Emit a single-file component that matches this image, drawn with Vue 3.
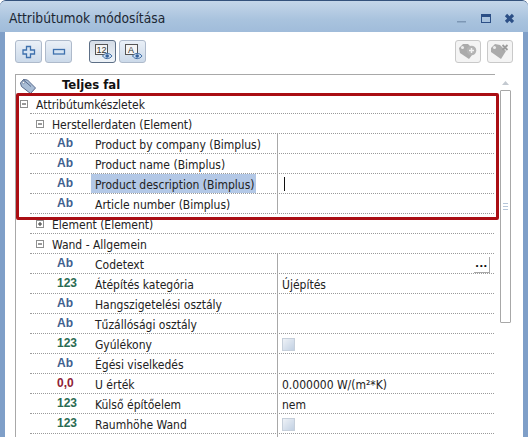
<script setup>
const rows = [
  { type: 'group', level: 0, open: true, label: 'Attribútumkészletek' },
  { type: 'group', level: 1, open: true, label: 'Herstellerdaten (Element)' },
  { kind: 'ab', label: 'Product by company (Bimplus)' },
  { kind: 'ab', label: 'Product name (Bimplus)' },
  { kind: 'ab', label: 'Product description (Bimplus)', selected: true, caret: true },
  { kind: 'ab', label: 'Article number (Bimplus)' },
  { type: 'group', level: 1, open: false, label: 'Element (Element)' },
  { type: 'group', level: 1, open: true, label: 'Wand - Allgemein' },
  { kind: 'ab', label: 'Codetext', more: true },
  { kind: 'num', label: 'Átépítés kategória', value: 'Újépítés' },
  { kind: 'ab', label: 'Hangszigetelési osztály' },
  { kind: 'ab', label: 'Tűzállósági osztály' },
  { kind: 'num', label: 'Gyúlékony', check: true },
  { kind: 'ab', label: 'Égési viselkedés' },
  { kind: 'real', label: 'U érték', value: '0.000000 W/(m²*K)' },
  { kind: 'num', label: 'Külső építőelem', value: 'nem' },
  { kind: 'num', label: 'Raumhöhe Wand', check: true },
  { kind: '', label: '' }
]

const badges = { ab: 'Ab', num: '123', real: '0,0', '': '' }
</script>

<template>
  <div class="window">
    <header class="titlebar">
      <span class="title">Attribútumok módosítása</span>
      <div class="win-controls">
        <svg width="76" height="14" viewBox="0 0 76 14">
          <rect x="19" y="10" width="9" height="1.500" fill="#7d97b5" />
          <rect x="43.500" y="3.500" width="9" height="8" fill="none" stroke="#2c4f86" />
          <rect x="43" y="3" width="10" height="3" fill="#2c4f86" />
          <path d="M68 4l7 7M75 4l-7 7" stroke="#2c4f86" stroke-width="3.200" />
        </svg>
      </div>
    </header>

    <div class="content">
      <div class="toolbar">
        <button class="tool">
          <svg width="14" height="14" viewBox="0 0 14 14">
            <path d="M4.500 1.500h4v3.500h4v4h-4v3.500h-4v-3.500h-3.500v-4h3.500z" fill="#d6e4f3" stroke="#3e70ad" stroke-width="1.300" />
          </svg>
        </button>
        <button class="tool">
          <svg width="14" height="14" viewBox="0 0 14 14">
            <rect x="1.500" y="4.500" width="11" height="4.500" fill="#d6e4f3" stroke="#3e70ad" stroke-width="1.300" />
          </svg>
        </button>
        <button class="tool tool-on gap-left">
          <svg width="22" height="20" viewBox="0 0 22 20">
            <rect x="3.500" y="2.500" width="12" height="10" fill="#f4f4f4" stroke="#555" />
            <text x="4.500" y="10.500" class="ico-text">12</text>
            <path d="M10.500 14c2.500-3.500 7-3.500 9.500 0-2.500 3.500-7 3.500-9.500 0z" fill="#cfe0f2" stroke="#3f6ea6" />
            <circle cx="15.200" cy="14" r="1.800" fill="#35609a" />
          </svg>
        </button>
        <button class="tool">
          <svg width="22" height="20" viewBox="0 0 22 20">
            <rect x="3.500" y="2.500" width="12" height="10" fill="#f4f4f4" stroke="#555" />
            <text x="6" y="10.500" class="ico-text">A</text>
            <path d="M10.500 14c2.500-3.500 7-3.500 9.500 0-2.500 3.500-7 3.500-9.500 0z" fill="#cfe0f2" stroke="#3f6ea6" />
            <circle cx="15.200" cy="14" r="1.800" fill="#35609a" />
          </svg>
        </button>
        <div class="tool-spacer"></div>
        <button class="tool tool-off">
          <svg width="20" height="17" viewBox="0 0 20 17">
            <path d="M1 5l4-4 5 0 7 7-6 8-9-6z" fill="#ababab" />
            <circle cx="4.500" cy="4.500" r="1.500" fill="#ececec" />
            <circle cx="13.500" cy="7.500" r="4.800" fill="#b3b3b3" />
            <path d="M13.500 5v5M11 7.500h5" stroke="#f2f2f2" stroke-width="1.500" />
          </svg>
        </button>
        <button class="tool tool-off">
          <svg width="20" height="17" viewBox="0 0 20 17">
            <path d="M1 5l4-4 5 1 6 6-5 8-10-7z" fill="#ababab" />
            <circle cx="4.500" cy="4.500" r="1.500" fill="#ececec" />
            <path d="M12.500 2l5 5M17.500 2l-5 5" stroke="#9c9c9c" stroke-width="1.800" />
          </svg>
        </button>
      </div>

      <div class="main">
        <div class="list">
          <div class="list-head">
            <svg class="tag" width="18" height="17" viewBox="0 0 18 17">
              <path d="M1.500 5l3-3.500 4 .5 8 8-5 5.500-9-7z" fill="#a9bdd6" stroke="#56688a" />
              <circle cx="4.500" cy="4.500" r="1.200" fill="#fff" stroke="#56688a" stroke-width=".6" />
              <path d="M4 1.500l8 7" stroke="#56688a" fill="none" />
            </svg>
            <span class="head-label">Teljes fal</span>
          </div>

          <div v-for="(row, i) in rows" :key="i" class="row">
            <template v-if="row.type === 'group'">
              <div class="group-cell" :class="'level-' + row.level">
                <svg class="expander" width="8" height="8" viewBox="0 0 8 8">
                  <rect x=".5" y=".5" width="7" height="7" fill="#fff" stroke="#8e8f8f" />
                  <path d="M2 4h4" stroke="#333" />
                  <path v-if="!row.open" d="M4 2v4" stroke="#333" />
                </svg>
                <span class="label-text">{{ row.label }}</span>
              </div>
            </template>
            <template v-else>
              <span class="badge" :class="'badge-' + row.kind">{{ badges[row.kind] }}</span>
              <span class="prop-name"><span class="label-text" :class="{ selected: row.selected }">{{ row.label }}</span></span>
              <div class="prop-value">
                <span v-if="row.value" class="label-text">{{ row.value }}</span>
                <span v-if="row.caret" class="caret"></span>
                <span v-if="row.check" class="checkbox"></span>
                <span v-if="row.more" class="more">...</span>
              </div>
            </template>
          </div>

          <div class="highlight"></div>
        </div>

        <div class="scrollbar">
          <svg class="arrow" width="7" height="4" viewBox="0 0 7 4">
            <path d="M3.500 0l3.500 4h-7z" fill="#c3c9d0" />
          </svg>
          <div class="thumb">
            <span class="grip"></span>
          </div>
        </div>
      </div>
    </div>
  </div>
</template>

<style>
html,
body {
  margin: 0;
  background: #fff;
  overflow: hidden;
}
</style>

<style scoped>
.window {
  width: 528px;
  height: 437px;
  box-sizing: border-box;
  overflow: hidden;
  display: flex;
  flex-direction: column;
  background: #7f9fc8;
  border-radius: 6px 6px 0 0;
  border-top: 1px solid #34527c;
  font-family: "DejaVu Sans Condensed", "DejaVu Sans", sans-serif;
  font-size: 12px;
  color: #222;
}

.titlebar {
  height: 31px;
  flex: none;
  display: flex;
  align-items: center;
  justify-content: space-between;
  padding: 0 14px 0 9px;
  background: linear-gradient(#c4d6e9, #a9c3de 60%, #a0bcda);
}

.title {
  font-size: 13.7px;
  color: #1c2733;
  margin-top: 3px;
}

.win-controls {
  display: flex;
  margin-top: 2px;
}

.content {
  flex: 1;
  min-height: 0;
  margin: 0 5px;
  padding: 8px 0 0 10px;
  background: #fff;
}

.toolbar {
  display: flex;
  gap: 3px;
  height: 23px;
  padding-right: 10px;
}

.tool {
  width: 27px;
  height: 23px;
  padding: 0;
  display: flex;
  align-items: center;
  justify-content: center;
  box-sizing: border-box;
  border: 1px solid #aebacb;
  border-radius: 3px;
  background: linear-gradient(#eaf0f7, #ccdaea);
}

.tool-on {
  border-color: #5d6f86;
  background: linear-gradient(#d5dde7, #eef3f8);
}

.gap-left {
  margin-left: 14px;
}

.tool-spacer {
  flex: 1;
}

.tool-off {
  width: 26px;
  border-color: #c9c9c9;
  background: #f4f4f4;
  margin-left: 3px;
}

.ico-text {
  font-family: "Liberation Sans", sans-serif;
  font-size: 9px;
  fill: #333;
}

.main {
  display: flex;
  margin-top: 11px;
}

.list {
  position: relative;
  width: 480px;
  flex: none;
  box-sizing: border-box;
  border-top: 1px solid #a8a8a8;
  border-left: 1px solid #a8a8a8;
}

.list-head {
  height: 19px;
  display: flex;
  align-items: center;
}

.tag {
  margin-left: 3px;
  margin-top: 3px;
}

.head-label {
  margin-left: 25px;
  font-weight: bold;
  font-size: 13px;
  color: #111;
  margin-top: -1px;
}

.row {
  position: relative;
  height: 20px;
  box-sizing: border-box;
  margin-left: 14px;
  margin-right: 1px;
  border-bottom: 1px dotted #9a9a9a;
  display: flex;
  align-items: center;
}

.group-cell {
  display: flex;
  align-items: center;
  height: 100%;
}

.level-0 {
  margin-left: -10px;
}

.level-1 {
  margin-left: 6px;
}

.expander {
  margin-right: 8px;
  flex: none;
}

.label-text {
  padding-top: 2px;
}

.badge {
  width: 38px;
  margin-left: 27px;
  flex: none;
  font-family: "Liberation Sans", sans-serif;
  font-weight: bold;
  font-size: 12px;
  margin-top: -1px;
}

.badge-ab {
  color: #3f5f8f;
}

.badge-num {
  color: #2a6b52;
}

.badge-real {
  color: #8f2336;
}

.prop-name {
  width: 182px;
  flex: none;
  height: 100%;
  display: flex;
  align-items: center;
  white-space: nowrap;
}

.selected {
  display: flex;
  align-items: center;
  box-sizing: border-box;
  height: 19px;
  padding-left: 4px;
  margin-left: -4px;
  width: 165px;
  background: #b3c8e6;
}

.prop-value {
  flex: 1;
  height: 20px;
  margin-bottom: -1px;
  box-sizing: border-box;
  border-left: 1px solid #a8a8a8;
  padding-left: 4px;
  display: flex;
  align-items: center;
  position: relative;
}

.caret {
  width: 1px;
  height: 14px;
  margin-left: 2px;
  background: #111;
}

.checkbox {
  width: 13px;
  height: 13px;
  box-sizing: border-box;
  border: 1px solid #c6cfda;
  background: linear-gradient(135deg, #eef2f7, #c2d1e3);
}

.more {
  position: absolute;
  right: 4px;
  bottom: 1px;
  width: 16px;
  height: 16px;
  box-sizing: border-box;
  border-right: 1px solid #a8a8a8;
  border-bottom: 1px solid #a8a8a8;
  background: #fff;
  font-weight: bold;
  font-family: "Liberation Sans", sans-serif;
  font-size: 13px;
  letter-spacing: .5px;
  line-height: 12px;
  text-align: center;
  color: #111;
}

.highlight {
  position: absolute;
  left: 0;
  top: 18px;
  width: 483px;
  height: 127px;
  box-sizing: border-box;
  border: 3px solid #aa0e14;
  border-radius: 2px;
  pointer-events: none;
}

.scrollbar {
  margin-left: 5px;
  width: 11px;
  flex: none;
  display: flex;
  flex-direction: column;
  align-items: center;
  padding-top: 7px;
}

.arrow {
  flex: none;
}

.thumb {
  margin-top: 5px;
  width: 11px;
  height: 233px;
  box-sizing: border-box;
  border: 1px solid #a8a8a8;
  border-radius: 1px;
  background: #fff;
  display: flex;
  align-items: center;
  justify-content: center;
}

.grip {
  width: 5px;
  height: 5px;
  border-top: 1px solid #b5c6da;
  border-bottom: 1px solid #b5c6da;
  background: linear-gradient(#fff 40%, #b5c6da 40%, #b5c6da 60%, #fff 60%);
}
</style>
